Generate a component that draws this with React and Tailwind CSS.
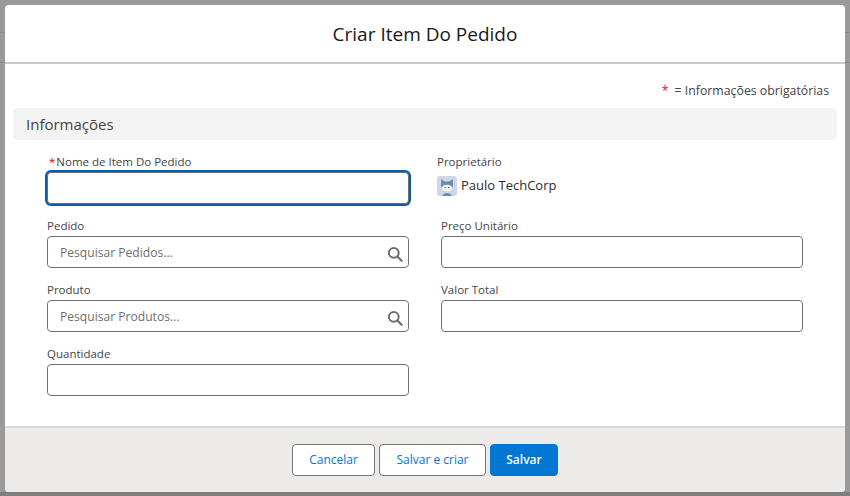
import React from "react";

const font = { fontFamily: '"Open Sans", "Noto Sans", sans-serif' };

function Search() {
  return (
    <svg width="16" height="16" viewBox="0 0 16 16" fill="none" className="absolute right-[5px] top-[9px]">
      <circle cx="6.8" cy="6.8" r="4.9" stroke="#706e6b" strokeWidth="2" />
      <path d="M10.4 10.4 L14.6 14.8" stroke="#706e6b" strokeWidth="2.2" strokeLinecap="round" />
    </svg>
  );
}

function Field({ label, placeholder, search, className = "" }) {
  return (
    <div className={`flex flex-col ${className}`}>
      <div className="h-[20px] text-[11.5px] leading-[20px] text-[#444444]">{label}</div>
      <div className="relative h-[32px] w-[362px] rounded-[4px] border border-[#706e6b] bg-white pl-[12px] text-[12.1px] leading-[31px] text-[#706e6b]">
        {placeholder}
        {search && <Search />}
      </div>
    </div>
  );
}

function Avatar() {
  return (
    <svg width="20" height="20" viewBox="0 0 20 20" className="mr-[4px] shrink-0">
      <rect width="20" height="20" rx="3" fill="#ccd8e8" />
      <path d="M4 10 L4.200 3 L7.500 5.500 H12.500 L15.800 3 L16 10 C16 13 4 13 4 10 Z" fill="#6f88ad" />
      <ellipse cx="10" cy="12" rx="4.800" ry="3.200" fill="#f6f8fb" />
      <path d="M5.500 20 C5.500 16 14.500 16 14.500 20 Z" fill="#6f88ad" />
      <circle cx="8.300" cy="11.500" r="0.700" fill="#44597a" />
      <circle cx="11.700" cy="11.500" r="0.700" fill="#44597a" />
    </svg>
  );
}

function Button({ children, primary, className = "" }) {
  return (
    <div
      className={`flex h-[32px] items-center justify-center rounded-[4px] border text-[12px] ${
        primary ? "border-[#0176d3] bg-[#0176d3] font-semibold text-white" : "border-[#747474] bg-white text-[#0176d3]"
      } ${className}`}
    >
      {children}
    </div>
  );
}

export default function App() {
  return (
    <div style={font} className="relative h-[496px] w-[850px] overflow-hidden bg-[#9a9a9a]">
      <div className="absolute left-0 top-[32px] h-px w-full bg-[#8a8a8a]" />
      <div className="absolute left-0 top-[62px] h-px w-full bg-[#8a8a8a]" />
      <div className="absolute bottom-0 left-0 h-[4px] w-full bg-[#7f7f7f]" />
      <div className="relative ml-[5px] mt-[5px] flex h-[487px] w-[840px] flex-col overflow-hidden rounded-[4px] bg-white">
        <header className="flex h-[59px] shrink-0 items-center justify-center border-b-2 border-[#c9c9c9] pt-[1px] text-[19px] text-[#181818]">
          Criar Item Do Pedido
        </header>
        <main className="flex-1 px-[8px]">
          <div className="flex h-[44px] items-center justify-end pr-[8px] pt-[10px] text-[12.3px] text-[#444444]">
            <span className="mr-[6px] text-[#ea001e]">*</span>= Informações obrigatórias
          </div>
          <div className="flex h-[32px] items-center rounded-[4px] bg-[#f3f3f3] pl-[13px] text-[15px] text-[#444444]">
            Informações
          </div>
          <div className="ml-[34px] mt-[11px] grid w-[756px] grid-cols-[362px_362px] gap-x-[32px]">
            <div className="flex flex-col">
              <div className="h-[21px] pl-[2px] text-[11.5px] leading-[21px] text-[#444444]">
                <span className="mr-[1px] text-[#ea001e]">*</span>Nome de Item Do Pedido
              </div>
              <div className="h-[32px] w-[362px] rounded-[4px] border border-[#706e6b] bg-white shadow-[0_0_0_2px_#0b5cab]" />
            </div>
            <div className="-ml-[4px] flex flex-col">
              <div className="h-[21px] text-[11.5px] leading-[21px] text-[#444444]">Proprietário</div>
              <div className="mt-[4px] flex h-[20px] items-center text-[13px] text-[#2b2b2b]">
                <Avatar />
                Paulo TechCorp
              </div>
            </div>
            <Field className="mt-[12px]" label="Pedido" placeholder="Pesquisar Pedidos..." search />
            <Field className="mt-[12px]" label="Preço Unitário" />
            <Field className="mt-[12px]" label="Produto" placeholder="Pesquisar Produtos..." search />
            <Field className="mt-[12px]" label="Valor Total" />
            <Field className="mt-[12px]" label="Quantidade" />
          </div>
        </main>
        <footer className="flex h-[66px] shrink-0 items-start justify-center gap-[4px] border-t-2 border-[#dddbda] bg-[#ecebea] pt-[16px]">
          <Button className="w-[83px]">Cancelar</Button>
          <Button className="w-[107px]">Salvar e criar</Button>
          <Button primary className="w-[68px]">Salvar</Button>
        </footer>
      </div>
    </div>
  );
}
